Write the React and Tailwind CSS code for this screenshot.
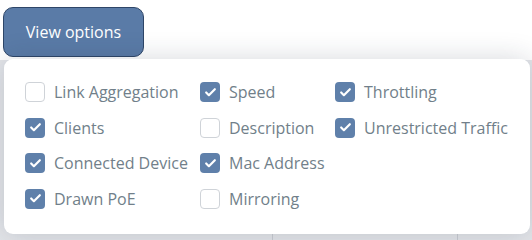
import { Check } from 'lucide-react';

const columns = [
  [
    { label: 'Link Aggregation', checked: false },
    { label: 'Clients', checked: true },
    { label: 'Connected Device', checked: true },
    { label: 'Drawn PoE', checked: true },
  ],
  [
    { label: 'Speed', checked: true },
    { label: 'Description', checked: false },
    { label: 'Mac Address', checked: true },
    { label: 'Mirroring', checked: false },
  ],
  [
    { label: 'Throttling', checked: true },
    { label: 'Unrestricted Traffic', checked: true },
  ],
];

const Option = ({ label, checked }) => (
  <label className="flex items-center gap-[9px] h-[20px]">
    {checked ? (
      <span className="w-[20px] h-[20px] rounded-[4px] bg-[#5f80aa] flex items-center justify-center">
        <Check size={13} strokeWidth={4} className="text-white" />
      </span>
    ) : (
      <span className="w-[20px] h-[20px] rounded-[4px] border border-[#cfd3d8] bg-white" />
    )}
    <span className="text-[16px] text-[#717f8a] whitespace-nowrap">{label}</span>
  </label>
);

const App = () => {
  return (
    <div className="relative w-[532px] h-[240px] overflow-hidden bg-white font-['Open_Sans',sans-serif]">
      <div className="pt-[7px] pl-[3px]">
        <button className="w-[141px] h-[50px] rounded-[10px] bg-[#5a7ba7] border border-[#2e4668] text-white text-[16px]">
          View options
        </button>
      </div>

      {/* table behind the menu */}
      <div className="absolute left-0 right-0 top-[60px] bottom-0 bg-[#e3e5e9]">
        <div className="grid grid-cols-[273px_185px_1fr] h-full">
          <div className="border-r border-[#c9ccd2]" />
          <div className="border-r border-[#c9ccd2]" />
          <div />
        </div>
      </div>

      <div className="absolute left-[4px] top-[59px] w-[526px] h-[175px] bg-white rounded-[9px] shadow-[0_0_28px_rgba(30,40,60,0.18)]">
        <div className="flex pl-[21px] pt-[23px]">
          {columns.map((col, i) => (
            <div
              key={i}
              className={`flex flex-col gap-[15.5px] ${i === 0 ? 'w-[175px]' : i === 1 ? 'w-[135px]' : ''}`}
            >
              {col.map((o) => (
                <Option key={o.label} {...o} />
              ))}
            </div>
          ))}
        </div>
      </div>
    </div>
  );
};

export default App;
